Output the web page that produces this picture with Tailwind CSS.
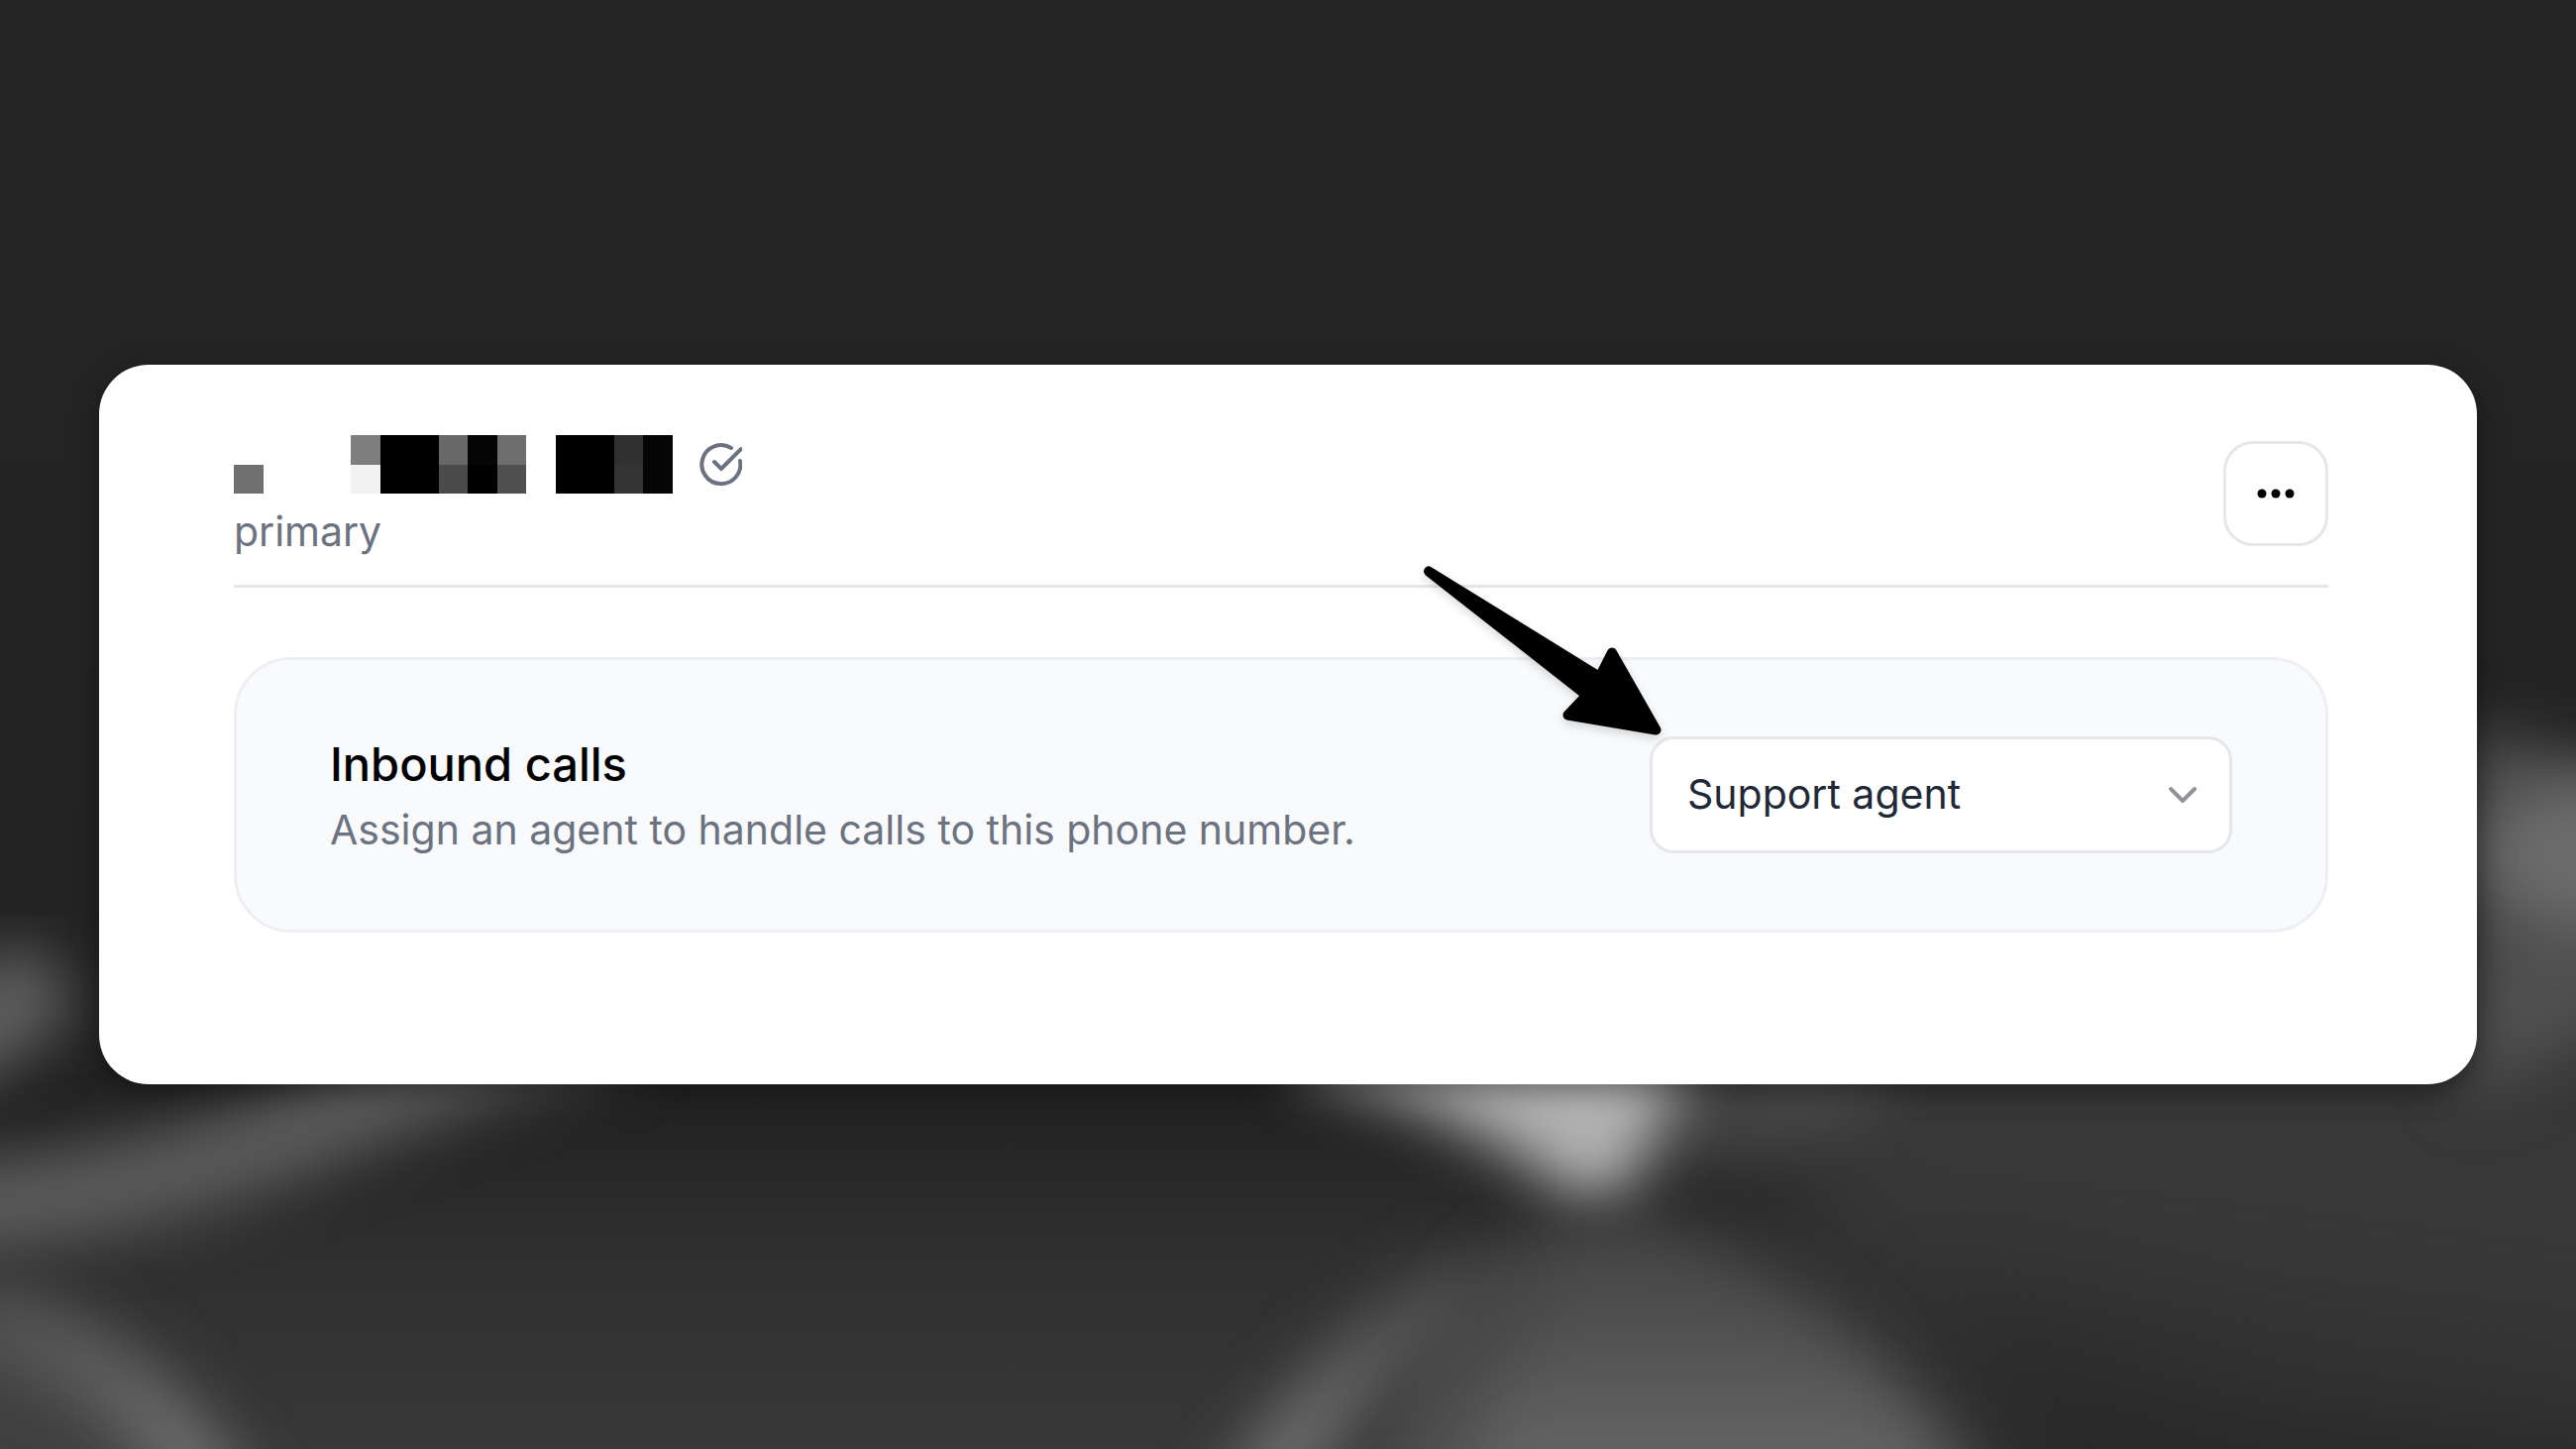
<!DOCTYPE html>
<html lang="en">
<head>
<meta charset="utf-8">
<meta name="viewport" content="width=device-width, initial-scale=1">
<title>Phone number</title>
<script src="https://cdn.jsdelivr.net/npm/@tailwindcss/browser@4"></script>
</head>
<body class="relative isolate flex min-h-screen items-center overflow-x-hidden bg-[#252525] px-[100px] font-['Inter',sans-serif]">

  <!-- Soft abstract backdrop -->
  <svg class="absolute inset-0 -z-10 size-full" viewBox="0 0 1568 882" preserveAspectRatio="none" color-interpolation-filters="sRGB" aria-hidden="true">
    <defs>
      <linearGradient id="base" x1="0" y1="0" x2="0" y2="1">
        <stop offset="0" stop-color="#252525"/>
        <stop offset=".77" stop-color="#232323"/>
        <stop offset=".86" stop-color="#2f2f2f"/>
        <stop offset="1" stop-color="#383838"/>
      </linearGradient>
      <linearGradient id="dome" x1="0" y1="740" x2="0" y2="882" gradientUnits="userSpaceOnUse">
        <stop offset="0" stop-color="#434343"/>
        <stop offset=".5" stop-color="#515151"/>
        <stop offset="1" stop-color="#636363"/>
      </linearGradient>
      <linearGradient id="streak" x1="0" y1="770" x2="0" y2="882" gradientUnits="userSpaceOnUse">
        <stop offset="0" stop-color="#484848"/>
        <stop offset="1" stop-color="#707070"/>
      </linearGradient>
      <filter id="b12" x="-50%" y="-50%" width="200%" height="200%"><feGaussianBlur stdDeviation="12"/></filter>
      <filter id="b18" x="-50%" y="-50%" width="200%" height="200%"><feGaussianBlur stdDeviation="18"/></filter>
      <filter id="b30" x="-60%" y="-60%" width="220%" height="220%"><feGaussianBlur stdDeviation="30"/></filter>
    </defs>
    <rect width="1568" height="882" fill="url(#base)"/>
    <path d="M1020 620H1700V840L1400 800L1130 770Z" fill="#383838" filter="url(#b30)"/>
    <path d="M1180 800L1240 960H1700V880L1380 850Z" fill="#292929" filter="url(#b30)"/>
    <path d="M-80 655Q-20 640 30 590" fill="none" stroke="#606060" stroke-width="56" filter="url(#b18)"/>
    <path d="M-80 738Q70 736 190 685T380 620" fill="none" stroke="#5c5c5c" stroke-width="54" filter="url(#b18)"/>
    <path d="M-60 790L20 800Q100 840 120 960H-60Z" fill="#404040" filter="url(#b18)"/>
    <path d="M-20 800Q100 825 140 940" fill="none" stroke="url(#streak)" stroke-width="44" filter="url(#b18)"/>
    <path d="M1000 620H1150V670Q1080 710 1010 710Z" fill="#555555" opacity=".6" filter="url(#b18)"/>
    <path d="M790 615L1030 615Q1025 680 985 730Q972 738 950 724Q900 680 790 650Z" fill="#b2b2b2" filter="url(#b18)"/>
    <path d="M840 940Q870 820 900 780Q960 725 1030 752Q1165 810 1212 940Z" fill="url(#dome)" filter="url(#b18)"/>
    <path d="M750 950Q790 840 900 780" fill="none" stroke="url(#streak)" stroke-width="42" filter="url(#b18)"/>
    <path d="M860 960Q870 850 930 770" fill="none" stroke="#454545" stroke-width="40" opacity=".7" filter="url(#b18)"/>
    <path d="M1500 440Q1550 460 1660 480V600L1500 670Z" fill="#505050" filter="url(#b18)"/>
    <ellipse cx="1590" cy="520" rx="80" ry="44" fill="#6c6c6c" filter="url(#b18)"/>
  </svg>

  <main class="w-full rounded-[50px] bg-white pt-[71px] pr-[150px] pb-[153px] pl-[136px] shadow-[0_8px_28px_rgba(0,0,0,0.4)]">
    <header class="flex items-start justify-between border-b-3 border-gray-200 pb-[26px]">
      <div>
        <div class="flex items-center gap-[26px]">
          <!-- Redacted phone number -->
          <svg class="h-[59px] w-[443px]" viewBox="0 0 15 2" preserveAspectRatio="none" shape-rendering="crispEdges" role="img" aria-label="Hidden phone number">
            <path d="M0 1h1v1h-1z" fill="#6f6f6f"/>
            <path d="M4 0h1v1h-1z" fill="#7e7e7e"/>
            <path d="M4 1h1v1h-1z" fill="#f1f1f1"/>
            <path d="M5 0h2v2h-2zM11 0h2v2h-2z" fill="#000"/>
            <path d="M7 0h1v1h-1z" fill="#686868"/>
            <path d="M7 1h1v1h-1z" fill="#4a4a4a"/>
            <path d="M8 0h1v1h-1z" fill="#050505"/>
            <path d="M8 1h1v1h-1z" fill="#000"/>
            <path d="M9 0h1v1h-1z" fill="#6e6e6e"/>
            <path d="M9 1h1v1h-1z" fill="#505050"/>
            <path d="M13 0h1v1h-1z" fill="#303030"/>
            <path d="M13 1h1v1h-1z" fill="#343434"/>
            <path d="M14 0h1v2h-1z" fill="#050505"/>
          </svg>
          <svg class="size-[44px]" viewBox="0 0 44 44" fill="none" stroke="#6b7280" stroke-width="4" stroke-linecap="round" stroke-linejoin="round" role="img" aria-label="Verified">
            <path d="M33 5A19.500 19.500 0 1 0 42 18"/>
            <path d="M16 19L23 26L43 6"/>
          </svg>
        </div>
        <p class="mt-[10px] text-[41px] leading-[56px] text-[#6b7280]">primary</p>
      </div>
      <button type="button" aria-label="More options" class="mt-[6px] flex size-[106px] items-center justify-center rounded-[30px] border-3 border-gray-200 bg-white">
        <svg class="h-[10px] w-[38px]" viewBox="0 0 38 10" fill="#000" aria-hidden="true">
          <circle cx="5" cy="5" r="4.5"/><circle cx="19" cy="5" r="4.5"/><circle cx="33" cy="5" r="4.5"/>
        </svg>
      </button>
    </header>

    <section class="mt-[70px] flex items-center justify-between rounded-[58px] border-3 border-[#eeeff2] bg-[#f9fafc] px-[94px] py-[73px]">
      <div class="flex flex-col gap-[6px]">
        <h2 class="text-[47px] leading-[64px] font-medium text-black"><label for="agent">Inbound calls</label></h2>
        <p class="text-[41px] leading-[56px] text-[#6b7280]">Assign an agent to handle calls to this phone number.</p>
      </div>
      <div class="relative">
        <select id="agent" class="block h-[118px] w-[588px] appearance-none rounded-[24px] border-3 border-gray-200 bg-white pr-[90px] pl-[35px] text-[41px] text-[#1f2937]">
          <option>Support agent</option>
        </select>
        <svg class="pointer-events-none absolute top-[49px] right-[34px] h-[20px] w-[32px]" viewBox="0 0 32 20" fill="none" stroke="#929297" stroke-width="4" stroke-linecap="round" stroke-linejoin="round" aria-hidden="true">
          <path d="M4 4L16 16L28 4"/>
        </svg>
        <!-- Callout arrow pointing at the drop-down -->
        <svg class="pointer-events-none absolute -top-[183px] -left-[235px] h-[200px] w-[260px] drop-shadow-[0_4px_5px_rgba(0,0,0,0.15)]" viewBox="1430 560 260 200" fill="#000" stroke="#000" stroke-width="10" stroke-linejoin="round" aria-hidden="true">
          <path d="M1442 576.500L1614.500 683L1627 658.500L1671.500 736.500L1582.500 721.500L1601.500 701.500Z"/>
        </svg>
      </div>
    </section>
  </main>
</body>
</html>
